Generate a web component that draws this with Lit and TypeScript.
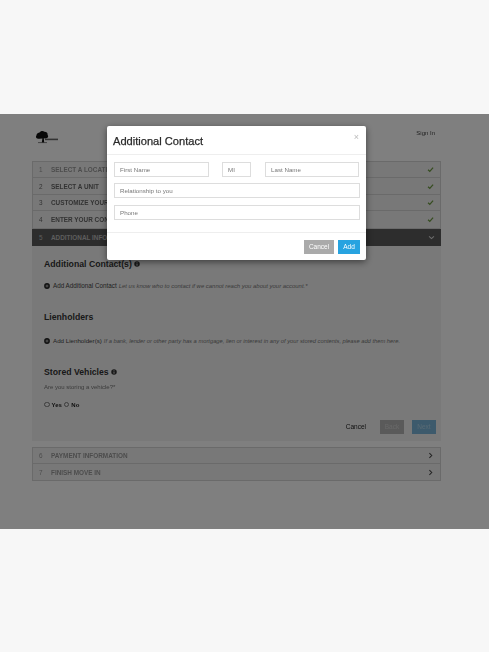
import { LitElement, html, css } from "lit";
import { customElement } from "lit/decorators.js";

const check = html`<svg class="ic" viewBox="0 0 10 10"><path d="M1.5 5.4 4 7.8 8.7 2.4" fill="none" stroke="#6c9a40" stroke-width="1.8"/></svg>`;
const down = html`<svg class="ic" viewBox="0 0 10 10"><path d="M1.5 3.4 5 6.6 8.5 3.4" fill="none" stroke="#ddd" stroke-width="1.5"/></svg>`;
const right = html`<svg class="ic" viewBox="0 0 10 10"><path d="M3.4 1.5 6.8 5 3.4 8.5" fill="none" stroke="#444" stroke-width="1.5"/></svg>`;
const info = html`<svg class="info" viewBox="0 0 10 10"><circle cx="5" cy="5" r="4.6" fill="#333"/><rect x="4.2" y="4.4" width="1.6" height="3.4" fill="#ddd"/><rect x="4.2" y="2.2" width="1.6" height="1.4" fill="#ddd"/></svg>`;
const add = html`<svg class="add" viewBox="0 0 10 10"><circle cx="5" cy="5" r="4.8" fill="#222"/><path d="M2.6 5h4.8M5 2.6v4.8" stroke="#ccc" stroke-width="1.3"/></svg>`;

@customElement("app-root")
export class AppRoot extends LitElement {
  static styles = css`
    :host { display: block; width: 489px; height: 652px; background: #f7f7f7; font-family: "Liberation Sans", Arial, sans-serif; color: #333; padding-top: 114px; box-sizing: border-box; }
    .stage { position: relative; height: 415px; background: #fff; padding: 0 48px 0 32px; display: flex; flex-direction: column; overflow: hidden; }
    .blur { filter: blur(0.5px); display: flex; flex-direction: column; }
    .top { height: 47px; width: 403px; display: flex; justify-content: space-between; align-items: flex-start; padding-left: 3px; box-sizing: border-box; }
    .logo { width: 24px; height: 14px; margin-top: 16px; }
    .sign { font-size: 6px; margin-top: 16px; color: #444; }
    .steps { border: 1px solid #d5d5d5; width: 409px; box-sizing: border-box; }
    .row { height: 16.4px; display: flex; align-items: center; font-size: 6.4px; font-weight: 700; color: #999; padding: 0 6px; border-bottom: 1px solid #d5d5d5; background: #f1f1f1; box-sizing: border-box; }
    .row:last-child { border-bottom: 0; }
    .row.done { color: #666; }
    .row .n { width: 12px; font-weight: 400; }
    .row .t { flex: 1; }
    .ic { width: 7px; height: 7px; }
    .cur { width: 409px; height: 17px; background: #5a5a5a; color: #bbb; display: flex; align-items: center; font-size: 6.4px; font-weight: 700; padding: 0 6px 0 7px; box-sizing: border-box; }
    .cur .n { width: 12px; font-weight: 400; }
    .cur .t { flex: 1; }
    .panel { width: 409px; height: 195px; background: #f3f3f3; padding: 12px 5px 7px 12px; box-sizing: border-box; display: flex; flex-direction: column; }
    h3 { margin: 0; font-size: 8.7px; line-height: 12px; font-weight: 700; color: #333; display: flex; align-items: center; gap: 2px; }
    .info { width: 6px; height: 6px; margin-top: 1px; }
    .line { display: flex; align-items: center; font-size: 6.3px; margin-top: 12px; line-height: 8px; white-space: nowrap; color: #444; }
    .add { width: 6px; height: 6px; margin-right: 3px; }
    .line i { color: #777; margin-left: 2px; font-size: 5.95px; }
    .l2 { margin-top: 14px; font-size: 6.2px; }
    .line.l2 i { font-size: 5.78px; }
    .sec { margin-top: 21px; }
    .ask { font-size: 6px; color: #777; margin-top: 5px; line-height: 8px; }
    .radios { display: flex; align-items: center; font-size: 6px; font-weight: 700; color: #222; margin-top: 10px; height: 8px; }
    .radio { width: 5.5px; height: 5.5px; border: .6px solid #777; border-radius: 50%; background: #f4f4f4; margin-right: 2px; box-sizing: border-box; }
    .radios span { margin-right: 2px; }
    .actions { display: flex; justify-content: flex-end; align-items: center; margin-top: auto; font-size: 6.5px; }
    .actions .c { color: #222; margin-right: 14px; }
    .ghost { height: 14px; display: flex; align-items: center; justify-content: center; font-size: 6.5px; }
    .back { width: 24px; background: #b4b4b4; color: #d2d2d2; margin-right: 8px; }
    .next { width: 24px; background: #7ab4d8; color: #b0d4e8; }
    .steps2 { margin-top: 6px; }
    .overlay { position: absolute; inset: 0; background: rgba(0,0,0,.5); }
    .modal { position: absolute; left: 107px; top: 12px; width: 259px; height: 134px; background: #fff; border-radius: 2px; box-shadow: 0 2px 7px rgba(0,0,0,.5); display: flex; flex-direction: column; box-sizing: border-box; filter: blur(0.3px); }
    .mh { flex: none; height: 27px; padding: 1px 6px 0; border-bottom: 1px solid #eee; display: flex; align-items: center; justify-content: space-between; }
    .mh b { font-weight: 400; font-size: 11.1px; color: #2a2a2a; -webkit-text-stroke: .25px #2a2a2a; }
    .x { font-size: 9px; color: #bbb; margin: -8px 1px 0 0; }
    .mb { flex: 1; padding: 7px 6px 0 7px; display: flex; flex-direction: column; }
    .fr { display: flex; }
    .f { height: 15px; border: 1.4px solid #ddd; box-sizing: border-box; font-size: 6.2px; color: #777; display: flex; align-items: center; padding-left: 5px; }
    .w95 { width: 95px; } .w29 { width: 29px; margin: 0 14px 0 13px; } .w94 { width: 94px; }
    .full { width: 246px; margin-top: 6px; }
    .full + .full { margin-top: 7px; }
    .mf { height: 27px; border-top: 1px solid #eee; display: flex; justify-content: flex-end; align-items: center; gap: 4px; padding: 0 6px 0 0; flex: none; }
    .mf span { height: 14px; display: flex; align-items: center; justify-content: center; font-size: 6.5px; color: #fff; }
    .bc { width: 30px; background: #aaa; }
    .ba { width: 22px; background: #27a3e0; }
  `;

  render() {
    const rows = [["1", "SELECT A LOCATION"], ["2", "SELECT A UNIT"], ["3", "CUSTOMIZE YOUR UNIT"], ["4", "ENTER YOUR CONTACT INFO"]];
    return html`
      <div class="stage">
        <div class="blur">
          <div class="top">
            <svg class="logo" viewBox="0 0 24 14">
              <path d="M6.8 12.6 7.4 8.4 4.5 8.8C1.5 9 .2 7.4 1.4 5.6 1.4 3.2 3.5 2.6 4.6 2.4 5.6.6 8.2.4 9.5 1.8 11.8 1.8 13 3.4 12.6 5 14 6.6 12.6 8.6 10.4 8.4L8.8 8.2 9.2 12.6Z" fill="#111"/>
              <path d="M3 12.6H12" stroke="#333" stroke-width=".6"/>
              <path d="M10 9.4H23" stroke="#666" stroke-width="1.6"/>
            </svg>
            <span class="sign">Sign In</span>
          </div>
          <div class="steps">
            ${rows.map(([n, t], i) => html`<div class="row ${i ? "done" : ""}"><span class="n">${n}</span><span class="t">${t}</span>${check}</div>`)}
          </div>
          <div class="cur"><span class="n">5</span><span class="t">ADDITIONAL INFORMATION</span>${down}</div>
          <div class="panel">
            <h3>Additional Contact(s) ${info}</h3>
            <div class="line">${add}Add Additional Contact <i>Let us know who to contact if we cannot reach you about your account.*</i></div>
            <h3 class="sec">Lienholders</h3>
            <div class="line l2">${add}Add Lienholder(s) <i>If a bank, lender or other party has a mortgage, lien or interest in any of your stored contents, please add them here.</i></div>
            <h3 class="sec">Stored Vehicles ${info}</h3>
            <div class="ask">Are you storing a vehicle?*</div>
            <div class="radios"><div class="radio"></div><span>Yes</span><div class="radio"></div><span>No</span></div>
            <div class="actions"><span class="c">Cancel</span><span class="ghost back">Back</span><span class="ghost next">Next</span></div>
          </div>
          <div class="steps steps2">
            <div class="row"><span class="n">6</span><span class="t">PAYMENT INFORMATION</span>${right}</div>
            <div class="row"><span class="n">7</span><span class="t">FINISH MOVE IN</span>${right}</div>
          </div>
        </div>
        <div class="overlay"></div>
        <div class="modal">
          <div class="mh"><b>Additional Contact</b><span class="x">×</span></div>
          <div class="mb">
            <div class="fr"><div class="f w95">First Name</div><div class="f w29">MI</div><div class="f w94">Last Name</div></div>
            <div class="f full">Relationship to you</div>
            <div class="f full">Phone</div>
          </div>
          <div class="mf"><span class="bc">Cancel</span><span class="ba">Add</span></div>
        </div>
      </div>
    `;
  }
}
